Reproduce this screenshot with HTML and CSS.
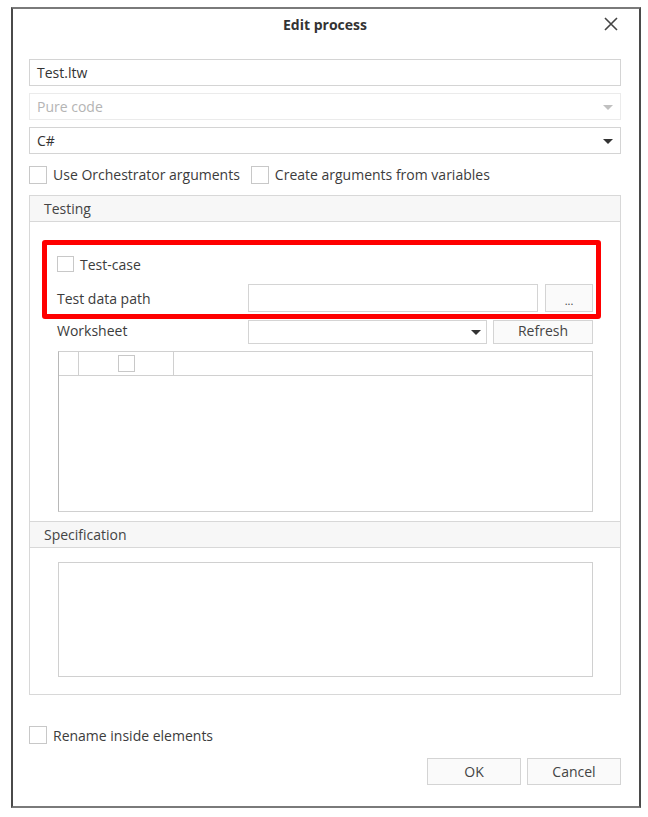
FILE: index.html
```html
<!DOCTYPE html>
<html>
<head>
<meta charset="utf-8">
<link rel="stylesheet" href="styles.css">
</head>
<body>
<div class="dialog">
  <div class="titlebar">
    <span></span>
    <span class="title">Edit process</span>
    <span class="close">
      <svg width="14" height="14" viewBox="0 0 14 14"><path d="M1 1 L13 13 M13 1 L1 13" stroke="#444" stroke-width="1.6" fill="none"/></svg>
    </span>
  </div>

  <div class="fields">
    <div class="input">Test.ltw</div>
    <div class="input combo disabled">Pure code<span class="arrow light"></span></div>
    <div class="input combo">C#<span class="arrow"></span></div>
  </div>

  <div class="checks">
    <label class="check"><span class="box"></span>Use Orchestrator arguments</label>
    <label class="check"><span class="box"></span>Create arguments from variables</label>
  </div>

  <div class="group">
    <div class="group-header first">Testing</div>
    <div class="testing-body">
      <div class="row row-check"><label class="check"><span class="box"></span>Test-case</label></div>
      <div class="row row-path">
        <span class="label">Test data path</span>
        <div class="input path"></div>
        <div class="btn small">...</div>
      </div>
      <div class="row row-ws">
        <span class="label">Worksheet</span>
        <div class="input combo ws"><span class="arrow"></span></div>
        <div class="btn refresh">Refresh</div>
      </div>
      <div class="grid">
        <div class="grid-head">
          <div class="gcol c1"></div>
          <div class="gcol c2"><span class="box"></span></div>
          <div class="gcol c3"></div>
        </div>
      </div>
      <div class="highlight"></div>
    </div>
    <div class="group-header">Specification</div>
    <div class="spec-body">
      <div class="textarea"></div>
    </div>
  </div>

  <div class="bottom">
    <label class="check"><span class="box"></span>Rename inside elements</label>
  </div>
  <div class="actions">
    <div class="btn action">OK</div>
    <div class="btn action">Cancel</div>
  </div>
</div>
</body>
</html>
```

FILE: styles.css
```css
* { box-sizing: border-box; }
html, body { margin: 0; padding: 0; background: #fff; }
body {
  font-family: "Open Sans", "Noto Sans", sans-serif;
  font-size: 14px;
  color: #3c3c3c;
}
.dialog {
  width: 630px;
  height: 801px;
  margin: 7px 0 0 11px;
  border: 2px solid #4a4a4a;
  border-top-color: #7a7a7a;
  border-bottom-color: #7a7a7a;
  padding: 0 18px 0 16px;
  display: flex;
  flex-direction: column;
}
.titlebar {
  height: 30px;
  display: grid;
  grid-template-columns: 1fr auto 1fr;
  align-items: center;
}
.title { font-weight: 700; color: #333; font-size: 14px; }
.close { justify-self: end; margin-right: 3px; display: flex; }
.fields { margin-top: 20px; display: flex; flex-direction: column; gap: 7px; }
.input {
  height: 27px;
  border: 1px solid #d4d4d4;
  background: #fff;
  padding: 0 7px;
  display: flex;
  align-items: center;
  color: #333;
  position: relative;
}
.input.disabled { color: #b4b4b4; border-color: #ebebeb; }
.arrow {
  position: absolute;
  right: 7px;
  top: 50%;
  margin-top: -2px;
  width: 0; height: 0;
  border-left: 5px solid transparent;
  border-right: 5px solid transparent;
  border-top: 5px solid #333;
}
.arrow.light { border-top-color: #c0c0c0; }
.checks { margin-top: 12px; display: flex; gap: 11px; height: 17px; }
.check { display: flex; align-items: center; gap: 6px; color: #3c3c3c; }
.box {
  width: 18px; height: 18px;
  border: 1px solid #c8c8c8;
  background: #fff;
  display: inline-block;
  flex: none;
}
.group {
  margin-top: 12px;
  height: 500px;
  border: 1px solid #d8d8d8;
  display: flex;
  flex-direction: column;
}
.group-header {
  height: 27px;
  background: #f7f7f7;
  border-top: 1px solid #d8d8d8;
  border-bottom: 1px solid #d8d8d8;
  padding-left: 14px;
  display: flex;
  align-items: center;
  color: #444;
}
.group-header.first { border-top: none; height: 27px; }
.testing-body {
  position: relative;
  padding: 30px 27px 9px 27px;
  display: flex;
  flex-direction: column;
}
.row { display: flex; align-items: center; }
.row-check { height: 24px; }
.row-check .check { gap: 6px; }
.row-check .box { width: 17px; height: 16px; }
.row-path { margin-top: 8px; height: 28px; }
.row-ws { margin-top: 8px; height: 24px; }
.row-ws .label { padding-bottom: 4px; }
.label { width: 191px; flex: none; color: #3c3c3c; }
.input.path { width: 290px; height: 28px; }
.btn {
  border: 1px solid #d4d4d4;
  background: #fafafa;
  display: flex;
  align-items: center;
  justify-content: center;
  color: #444;
}
.btn.small { width: 48px; height: 28px; margin-left: 7px; font-size: 11px; padding-top: 4px; }
.input.ws { width: 239px; height: 24px; }
.input.ws .arrow { right: 5px; }
.btn.refresh { width: 100px; height: 24px; margin-left: 6px; padding-bottom: 4px; }
.grid {
  margin-top: 7px;
  margin-left: 1px;
  height: 161px;
  border: 1px solid #d0d0d0;
  border-left-color: #b8b8b8;
}
.grid-head { display: flex; height: 24px; border-bottom: 1px solid #d0d0d0; }
.gcol { height: 100%; }
.gcol.c1 { width: 20px; border-right: 1px solid #d0d0d0; }
.gcol.c2 { width: 95px; border-right: 1px solid #d0d0d0; display: flex; align-items: center; justify-content: center; }
.gcol.c2 .box { width: 17px; height: 17px; }
.highlight {
  position: absolute;
  left: 12px;
  top: 18px;
  width: 559px;
  height: 79px;
  border: 5px solid #ff0000;
  border-radius: 3px;
}
.spec-body { padding: 14px 27px 17px 28px; }
.textarea { height: 115px; border: 1px solid #d0d0d0; }
.bottom { margin-top: 31px; height: 18px; display: flex; }
.actions { margin-top: 14px; display: flex; justify-content: flex-end; gap: 6px; }
.btn.action { width: 94px; height: 27px; }
```
